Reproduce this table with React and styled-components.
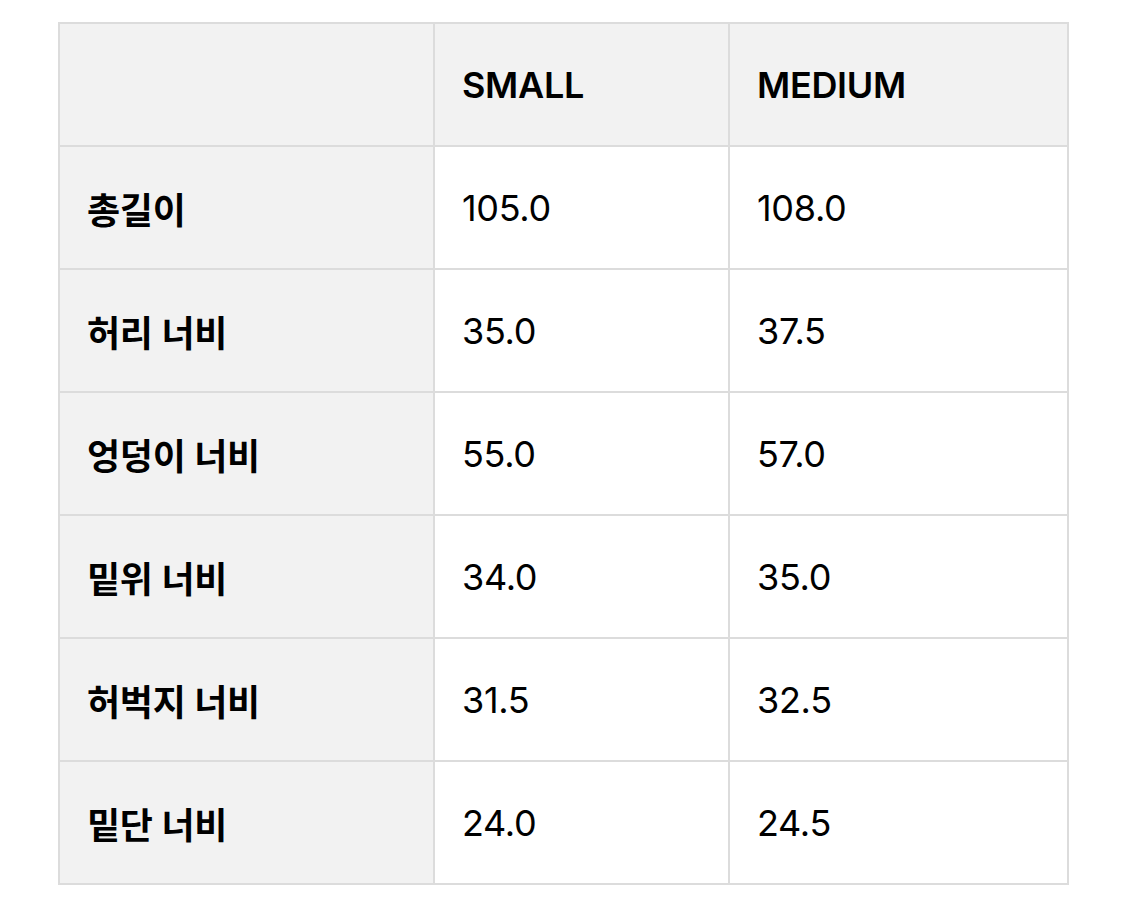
import React from 'react';
import styled, { createGlobalStyle } from 'styled-components';

const GlobalStyle = createGlobalStyle`
  body {
    margin: 0;
    background: #ffffff;
    font-family: Inter, "Noto Sans CJK KR", sans-serif;
    color: #000000;
  }
`

const Page = styled.div`
  padding: 22px 58px;
`

const SizeTable = styled.table`
  width: 1009px;
  border-collapse: collapse;
  table-layout: fixed;
  border: 2px solid #e0e0e0;
`

const Cell = styled.td`
  height: 121px;
  padding: 0 0 0 27px;
  border: 2px solid #dcdcdc;
  font-size: 36px;
  font-weight: ${props => props.bold ? 600 : 400};
  background: ${props => props.shaded ? '#f2f2f2' : '#ffffff'};
  letter-spacing: -0.3px;
  vertical-align: middle;
  text-align: left;
`

const sizes = ['SMALL', 'MEDIUM']

const rows = [
  { label: '총길이', values: ['105.0', '108.0'] },
  { label: '허리 너비', values: ['35.0', '37.5'] },
  { label: '엉덩이 너비', values: ['55.0', '57.0'] },
  { label: '밑위 너비', values: ['34.0', '35.0'] },
  { label: '허벅지 너비', values: ['31.5', '32.5'] },
  { label: '밑단 너비', values: ['24.0', '24.5'] },
]

const App = () => {
  return (
    <Page>
      <GlobalStyle />
      <SizeTable>
        <colgroup>
          <col style={{ width: 375 }} />
          <col style={{ width: 295 }} />
          <col style={{ width: 339 }} />
        </colgroup>
        <thead>
          <tr>
            <Cell as="th" shaded bold></Cell>
            {sizes.map(s => <Cell as="th" key={s} shaded bold>{s}</Cell>)}
          </tr>
        </thead>
        <tbody>
          {rows.map(row => (
            <tr key={row.label}>
              <Cell shaded bold>{row.label}</Cell>
              {row.values.map((v, i) => <Cell key={i}>{v}</Cell>)}
            </tr>
          ))}
        </tbody>
      </SizeTable>
    </Page>
  );
}

export default App
